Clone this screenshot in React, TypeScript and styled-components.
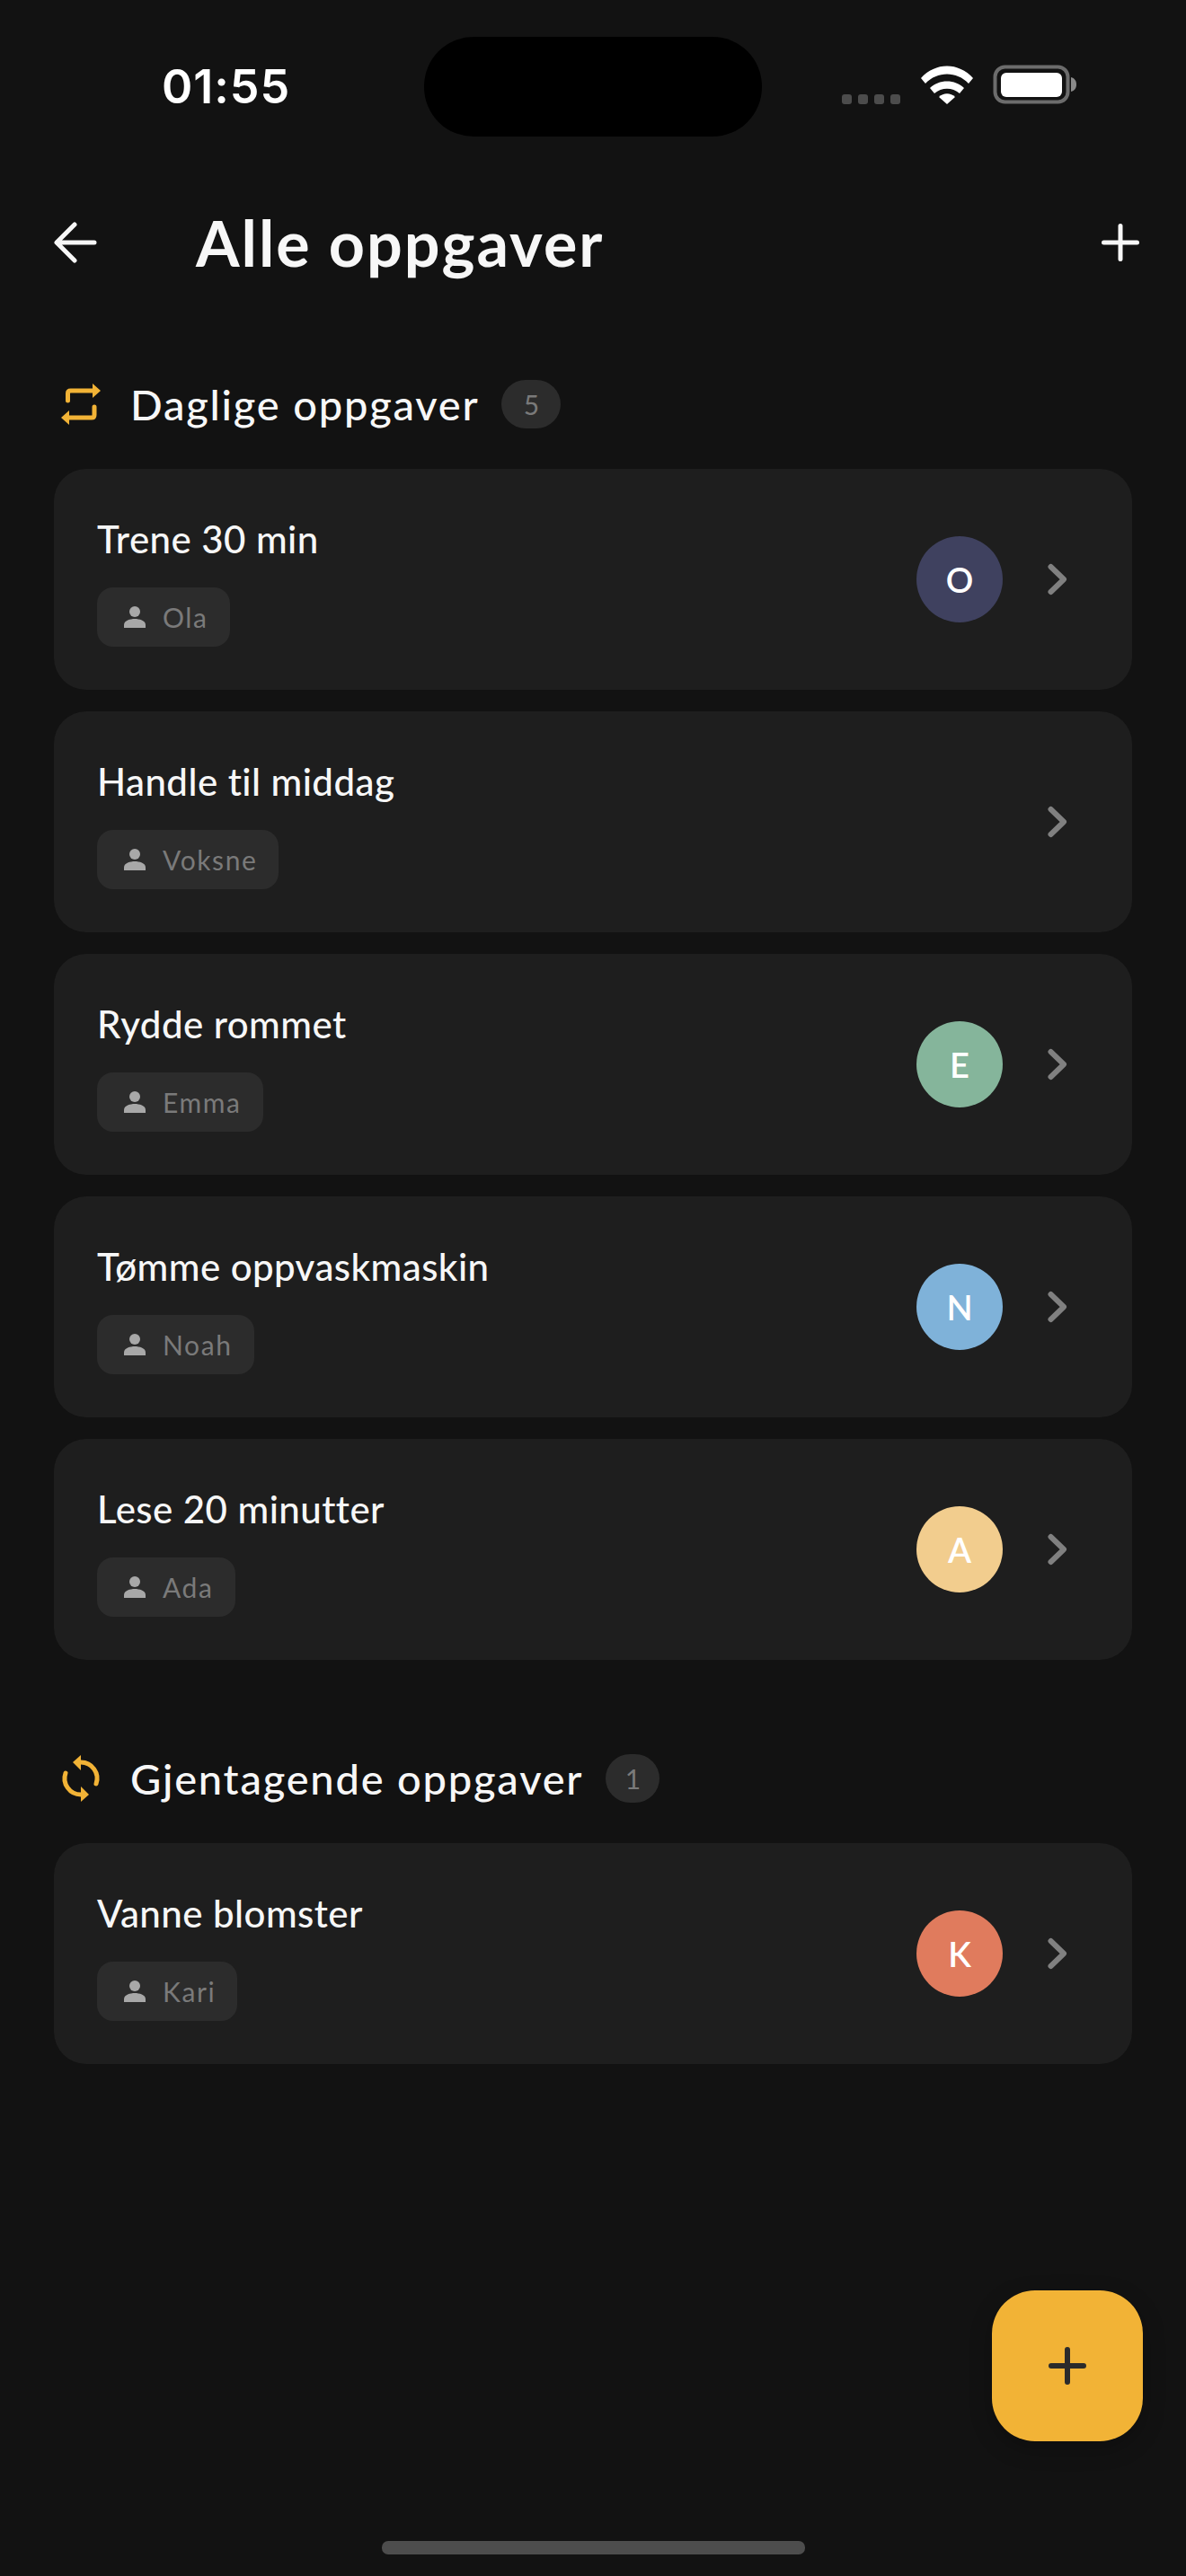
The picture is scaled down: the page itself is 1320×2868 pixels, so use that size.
import React from 'react'
import styled, { createGlobalStyle } from 'styled-components'

const GlobalStyle = createGlobalStyle`
  html, body {
    margin: 0;
    padding: 0;
    background: #121212;
  }
  * {
    box-sizing: border-box;
  }
`

const Page = styled.div`
  position: relative;
  width: 1320px;
  height: 2868px;
  overflow: hidden;
  background: #121212;
  color: #f7f7f7;
  font-family: Lato, 'Noto Sans', sans-serif;
`

const StatusBar = styled.div`
  display: flex;
  align-items: flex-start;
  height: 152px;
  padding-top: 41px;
`

const Time = styled.div`
  width: 472px;
  padding: 27px 0 0 180px;
  font-family: Inter, sans-serif;
  font-size: 52px;
  line-height: 58px;
  font-weight: 600;
  letter-spacing: 1px;
  color: #fff;
`

const Island = styled.div`
  width: 376px;
  height: 111px;
  border-radius: 55px;
  background: #000;
`

const StatusIcons = styled.div`
  display: flex;
  align-items: flex-end;
  height: 75px;
  margin-left: 89px;
`

const SignalDots = styled.div`
  display: flex;
  gap: 7px;
  margin-right: 23px;
`

const SignalDot = styled.span`
  width: 11px;
  height: 11px;
  border-radius: 3px;
  background: #4c4c4c;
`

const NavBar = styled.div`
  display: flex;
  align-items: center;
  height: 100px;
  margin-top: 68px;
  padding: 0 52px 0 60px;
`

const NavTitle = styled.h1`
  flex: 1;
  margin: 0 0 0 110px;
  font-size: 70px;
  line-height: 80px;
  font-weight: 700;
  letter-spacing: 2px;
  color: #f7f7f7;
`

const Section = styled.section<{ $top: number }>`
  margin-top: ${(p) => p.$top}px;
  padding: 0 60px;
`

const SectionHeader = styled.div`
  display: flex;
  align-items: center;
  height: 54px;
  margin-bottom: 45px;
`

const SectionTitle = styled.h2`
  margin: 0 25px 0 25px;
  font-size: 47px;
  line-height: 54px;
  font-weight: 500;
  letter-spacing: 1.8px;
  color: #f7f7f7;
`

const CountBadge = styled.span<{ $wide?: boolean }>`
  display: flex;
  align-items: center;
  justify-content: center;
  width: ${(p) => (p.$wide ? 66 : 60)}px;
  height: 54px;
  border-radius: 27px;
  background: #2c2c2c;
  color: #7a7a7a;
  font-size: 30px;
`

const TaskList = styled.div`
  display: flex;
  flex-direction: column;
  gap: 24px;
`

const TaskCard = styled.div`
  display: flex;
  align-items: center;
  height: 246px;
  padding: 0 72px 0 48px;
  border-radius: 36px;
  background: #1e1e1e;
`

const TaskBody = styled.div`
  flex: 1;
  display: flex;
  flex-direction: column;
  align-items: flex-start;
  padding-top: 5px;
`

const TaskTitle = styled.div`
  font-size: 42px;
  line-height: 50px;
  font-weight: 500;
  letter-spacing: 0.45px;
  color: #f7f7f7;
`

const OwnerChip = styled.div`
  display: flex;
  align-items: center;
  gap: 19px;
  height: 66px;
  margin-top: 29px;
  padding: 0 24px 0 30px;
  border-radius: 18px;
  background: #2c2c2c;
  color: #7a7a7a;
  font-size: 30px;
  letter-spacing: 1.6px;
`

const Avatar = styled.div<{ $color: string }>`
  display: flex;
  align-items: center;
  justify-content: center;
  width: 96px;
  height: 96px;
  margin-right: 48px;
  border-radius: 50%;
  background: ${(p) => p.$color};
  color: #fff;
  font-size: 38px;
  font-weight: 600;
`

const Fab = styled.div`
  position: absolute;
  left: 1104px;
  top: 2550px;
  display: flex;
  align-items: center;
  justify-content: center;
  width: 168px;
  height: 168px;
  border-radius: 48px;
  background: #f2b336;
  box-shadow: 0 8px 24px rgba(0, 0, 0, 0.25);
`

const HomeIndicator = styled.div`
  position: absolute;
  left: 425px;
  top: 2829px;
  width: 471px;
  height: 15px;
  border-radius: 7px;
  background: #4d4d4d;
`

const PersonIcon = () => (
  <svg width="24" height="24" viewBox="0 0 24 24" fill="#a8a8a8">
    <circle cx="12" cy="6" r="6" />
    <path d="M0 24v-3.5C0 16 7 14 12 14s12 2 12 6.5V24z" />
  </svg>
)

const Chevron = () => (
  <svg width="24" height="38" viewBox="0 0 24 38" fill="none" stroke="#808080" strokeWidth="6" strokeLinecap="round" strokeLinejoin="round">
    <path d="M5.5 5L20 19 5.5 33" />
  </svg>
)

const RepeatIcon = () => (
  <svg width="60" height="60" viewBox="0 0 60 60" fill="none" stroke="#f2b336" strokeWidth="5" strokeLinecap="round">
    <path d="M15.5 26v-8q0-3 3-3H44" />
    <path d="M43 7l9 8-9 8z" fill="#f2b336" stroke="none" />
    <path d="M45 33v9q0 3-3 3H17" />
    <path d="M17 37l-9 8 9 8z" fill="#f2b336" stroke="none" />
  </svg>
)

const SyncIcon = () => (
  <svg width="60" height="60" viewBox="0 0 60 60" fill="none" stroke="#f2b336" strokeWidth="5" strokeLinecap="round">
    <path d="M30 12A18 18 0 0 1 47 36" />
    <path d="M21 12l9-8v17z" fill="#f2b336" stroke="none" />
    <path d="M13 24A18 18 0 0 0 30 48" />
    <path d="M39 48l-9 8V39z" fill="#f2b336" stroke="none" />
  </svg>
)

const PlusIcon = ({ size, color, weight }: { size: number; color: string; weight: number }) => (
  <svg width={size} height={size} viewBox={`0 0 ${size} ${size}`} fill="none" stroke={color} strokeWidth={weight} strokeLinecap="round">
    <path d={`M${size / 2} ${weight / 2}V${size - weight / 2}M${weight / 2} ${size / 2}H${size - weight / 2}`} />
  </svg>
)

type Task = { title: string; owner: string; initial?: string; color?: string }

const tasksDaily: Task[] = [
  { title: 'Trene 30 min', owner: 'Ola', initial: 'O', color: '#3f415f' },
  { title: 'Handle til middag', owner: 'Voksne' },
  { title: 'Rydde rommet', owner: 'Emma', initial: 'E', color: '#85b59b' },
  { title: 'Tømme oppvaskmaskin', owner: 'Noah', initial: 'N', color: '#7fb2d9' },
  { title: 'Lese 20 minutter', owner: 'Ada', initial: 'A', color: '#f2cd8e' },
]

const tasksRecurring: Task[] = [
  { title: 'Vanne blomster', owner: 'Kari', initial: 'K', color: '#e07b5d' },
]

const TaskRow = ({ task }: { task: Task }) => (
  <TaskCard>
    <TaskBody>
      <TaskTitle>{task.title}</TaskTitle>
      <OwnerChip>
        <PersonIcon />
        {task.owner}
      </OwnerChip>
    </TaskBody>
    {task.initial && <Avatar $color={task.color as string}>{task.initial}</Avatar>}
    <Chevron />
  </TaskCard>
)

export default function App() {
  return (
    <Page>
      <GlobalStyle />
      <StatusBar>
        <Time>01:55</Time>
        <Island />
        <StatusIcons>
          <SignalDots>
            <SignalDot />
            <SignalDot />
            <SignalDot />
            <SignalDot />
          </SignalDots>
          <svg width="173" height="44" viewBox="0 0 173 44">
            <path d="M0 15C16-3 42-3 58 15l-5 6C40 7 18 7 5 21z" fill="#fff" />
            <path d="M10 26c10-10 28-10 38 0l-5 6c-8-7-20-7-28 0z" fill="#fff" />
            <path d="M20 36c5-5 13-5 18 0l-9 8z" fill="#fff" />
            <rect x="82.5" y="2.5" width="81" height="39" rx="11" fill="none" stroke="#6c6c6c" strokeWidth="4" />
            <rect x="89" y="9" width="68" height="27" rx="6" fill="#fff" />
            <path d="M167 14c4 1 6 4 6 8s-2 7-6 8z" fill="#8a8a8a" />
          </svg>
        </StatusIcons>
      </StatusBar>
      <NavBar>
        <svg width="48" height="46" viewBox="0 0 48 46" fill="none" stroke="#f7f7f7" strokeWidth="5" strokeLinecap="round" strokeLinejoin="round">
          <path d="M45 23H4M23 3L3 23l20 20" />
        </svg>
        <NavTitle>Alle oppgaver</NavTitle>
        <PlusIcon size={42} color="#f7f7f7" weight={5} />
      </NavBar>
      <Section $top={103}>
        <SectionHeader>
          <RepeatIcon />
          <SectionTitle>Daglige oppgaver</SectionTitle>
          <CountBadge $wide>5</CountBadge>
        </SectionHeader>
        <TaskList>
          {tasksDaily.map((t) => (
            <TaskRow key={t.title} task={t} />
          ))}
        </TaskList>
      </Section>
      <Section $top={105}>
        <SectionHeader>
          <SyncIcon />
          <SectionTitle>Gjentagende oppgaver</SectionTitle>
          <CountBadge>1</CountBadge>
        </SectionHeader>
        <TaskList>
          {tasksRecurring.map((t) => (
            <TaskRow key={t.title} task={t} />
          ))}
        </TaskList>
      </Section>
      <Fab>
        <PlusIcon size={42} color="#2b2b2b" weight={6} />
      </Fab>
      <HomeIndicator />
    </Page>
  )
}
